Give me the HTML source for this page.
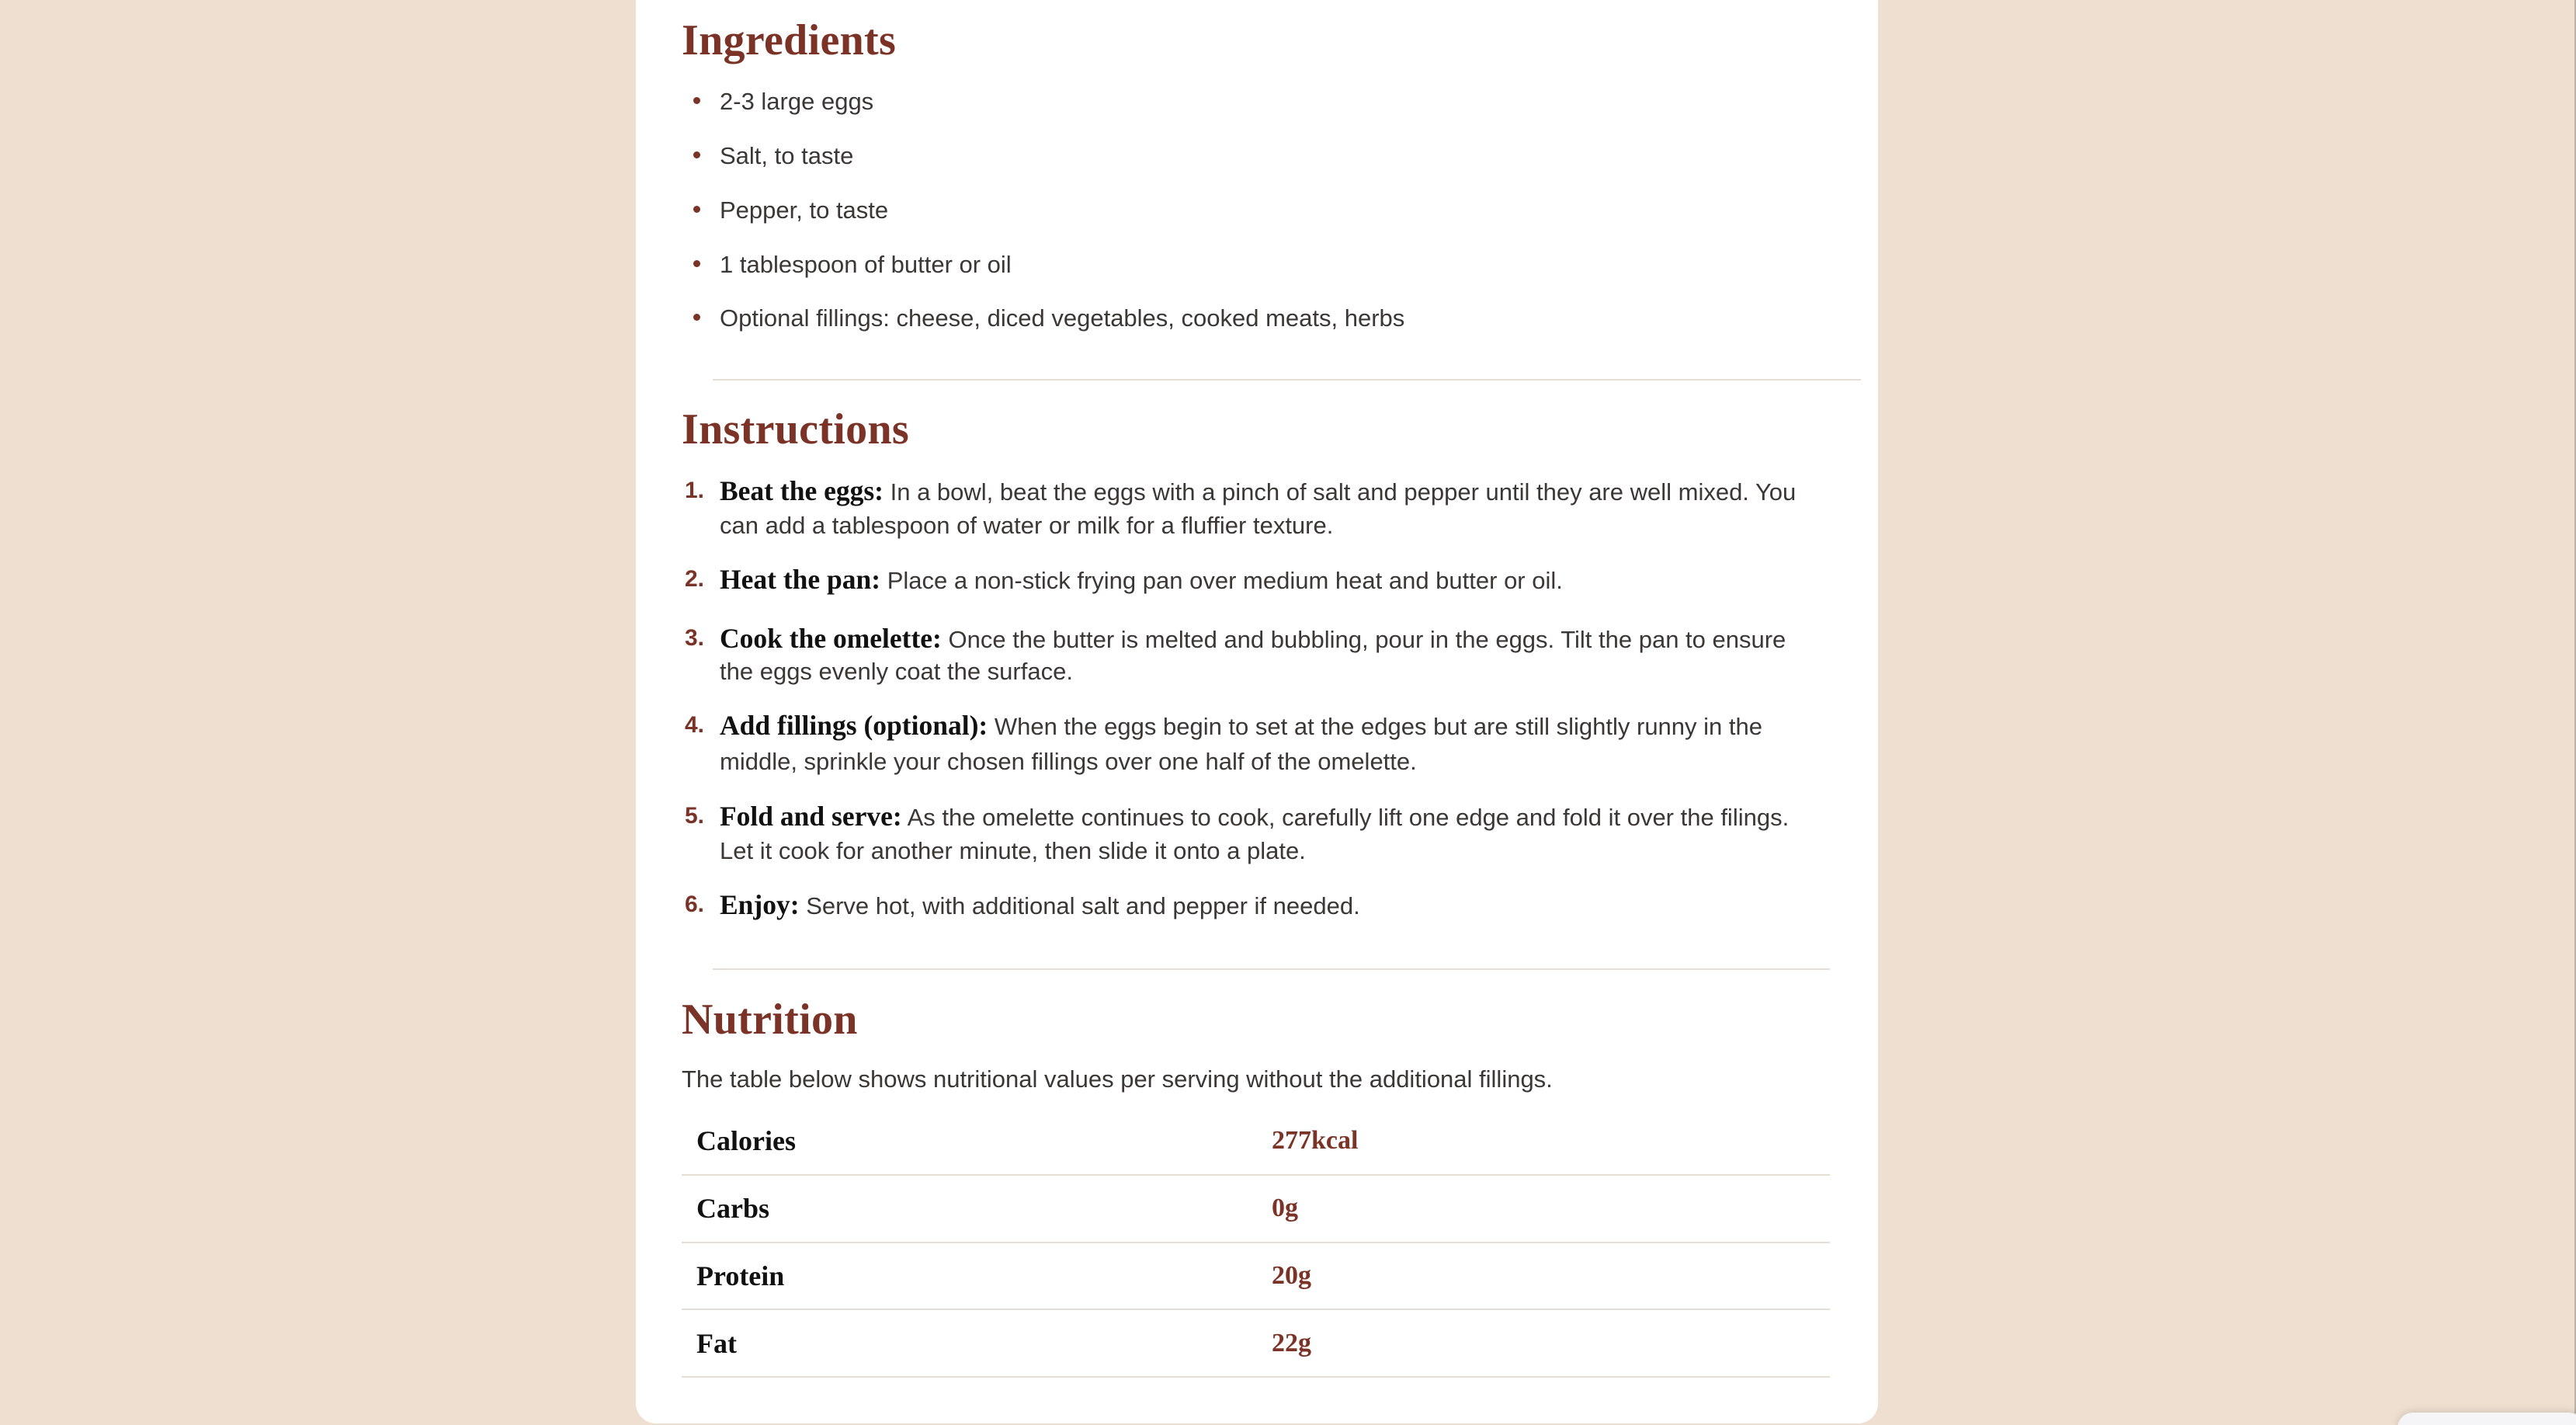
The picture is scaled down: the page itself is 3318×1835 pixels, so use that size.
<!DOCTYPE html>
<html><head><meta charset="utf-8"><style>
*{margin:0;padding:0;box-sizing:border-box}
html,body{width:3318px;height:1835px;overflow:hidden;background:#eedfd0}
body{position:relative;font-family:"Liberation Sans",sans-serif;color:#3b3734}
.card{position:absolute;left:819px;top:-40px;width:1600px;height:1873px;background:#fff;border-radius:26px}
.a{position:absolute;white-space:nowrap;line-height:44px;font-size:31px}
h2{position:absolute;left:878px;font-family:"Liberation Serif",serif;font-weight:bold;font-size:56px;color:#7a3326;line-height:60px;white-space:nowrap;letter-spacing:0.3px}
.dot{position:absolute;width:9px;height:9px;border-radius:50%;background:#7a3326}
.n{position:absolute;left:882px;font-weight:bold;color:#7a3326;font-size:30px;line-height:44px}
b.s{font-family:"Liberation Serif",serif;font-weight:bold;color:#111;font-size:35.5px}
.hr{position:absolute;height:2px;background:#e4ded7}
.tl{position:absolute;left:897px;font-family:"Liberation Serif",serif;font-weight:bold;font-size:36px;color:#111;line-height:44px}
.tv{position:absolute;left:1638px;font-family:"Liberation Serif",serif;font-weight:bold;font-size:34px;color:#7a3326;line-height:44px}
</style></head><body>
<div class="card"></div>

<h2 style="top:22px">Ingredients</h2>
<div class="dot" style="left:893px;top:125px"></div><div class="a" style="left:927px;top:109px">2-3 large eggs</div>
<div class="dot" style="left:893px;top:195px"></div><div class="a" style="left:927px;top:179px">Salt, to taste</div>
<div class="dot" style="left:893px;top:265px"></div><div class="a" style="left:927px;top:249px">Pepper, to taste</div>
<div class="dot" style="left:893px;top:335px"></div><div class="a" style="left:927px;top:319px">1 tablespoon of butter or oil</div>
<div class="dot" style="left:893px;top:404px"></div><div class="a" style="left:927px;top:388px">Optional fillings: cheese, diced vegetables, cooked meats, herbs</div>
<div class="hr" style="left:918px;top:488px;width:1479px"></div>

<h2 style="top:523px">Instructions</h2>
<div class="n" style="top:610px">1.</div>
<div class="a" style="left:927px;top:610px"><b class="s">Beat the eggs:</b> In a bowl, beat the eggs with a pinch of salt and pepper until they are well mixed. You</div>
<div class="a" style="left:927px;top:655px">can add a tablespoon of water or milk for a fluffier texture.</div>
<div class="n" style="top:724px">2.</div>
<div class="a" style="left:927px;top:724px"><b class="s">Heat the pan:</b> Place a non-stick frying pan over medium heat and butter or oil.</div>
<div class="n" style="top:800px">3.</div>
<div class="a" style="left:927px;top:800px"><b class="s">Cook the omelette:</b> Once the butter is melted and bubbling, pour in the eggs. Tilt the pan to ensure</div>
<div class="a" style="left:927px;top:843px">the eggs evenly coat the surface.</div>
<div class="n" style="top:912px">4.</div>
<div class="a" style="left:927px;top:912px"><b class="s">Add fillings (optional):</b> When the eggs begin to set at the edges but are still slightly runny in the</div>
<div class="a" style="left:927px;top:959px">middle, sprinkle your chosen fillings over one half of the omelette.</div>
<div class="n" style="top:1029px">5.</div>
<div class="a" style="left:927px;top:1029px"><b class="s">Fold and serve:</b> As the omelette continues to cook, carefully lift one edge and fold it over the filings.</div>
<div class="a" style="left:927px;top:1074px">Let it cook for another minute, then slide it onto a plate.</div>
<div class="n" style="top:1143px">6.</div>
<div class="a" style="left:927px;top:1143px"><b class="s">Enjoy:</b> Serve hot, with additional salt and pepper if needed.</div>
<div class="hr" style="left:918px;top:1247px;width:1439px"></div>

<h2 style="top:1283px">Nutrition</h2>
<div class="a" style="left:878px;top:1368px">The table below shows nutritional values per serving without the additional fillings.</div>
<div class="tl" style="top:1447px">Calories</div><div class="tv" style="top:1447px">277kcal</div>
<div class="hr" style="left:878px;top:1512px;width:1479px"></div>
<div class="tl" style="top:1534px">Carbs</div><div class="tv" style="top:1534px">0g</div>
<div class="hr" style="left:878px;top:1599px;width:1479px"></div>
<div class="tl" style="top:1621px">Protein</div><div class="tv" style="top:1621px">20g</div>
<div class="hr" style="left:878px;top:1685px;width:1479px"></div>
<div class="tl" style="top:1708px">Fat</div><div class="tv" style="top:1708px">22g</div>
<div class="hr" style="left:878px;top:1772px;width:1479px"></div>

<div style="position:absolute;right:0;top:0;width:2px;height:1820px;background:#b9b2ab"></div>
<div style="position:absolute;left:3088px;top:1819px;width:240px;height:40px;background:#f5f5f7;border-radius:20px;box-shadow:0 -2px 10px rgba(0,0,0,0.12)"></div>
</body></html>
